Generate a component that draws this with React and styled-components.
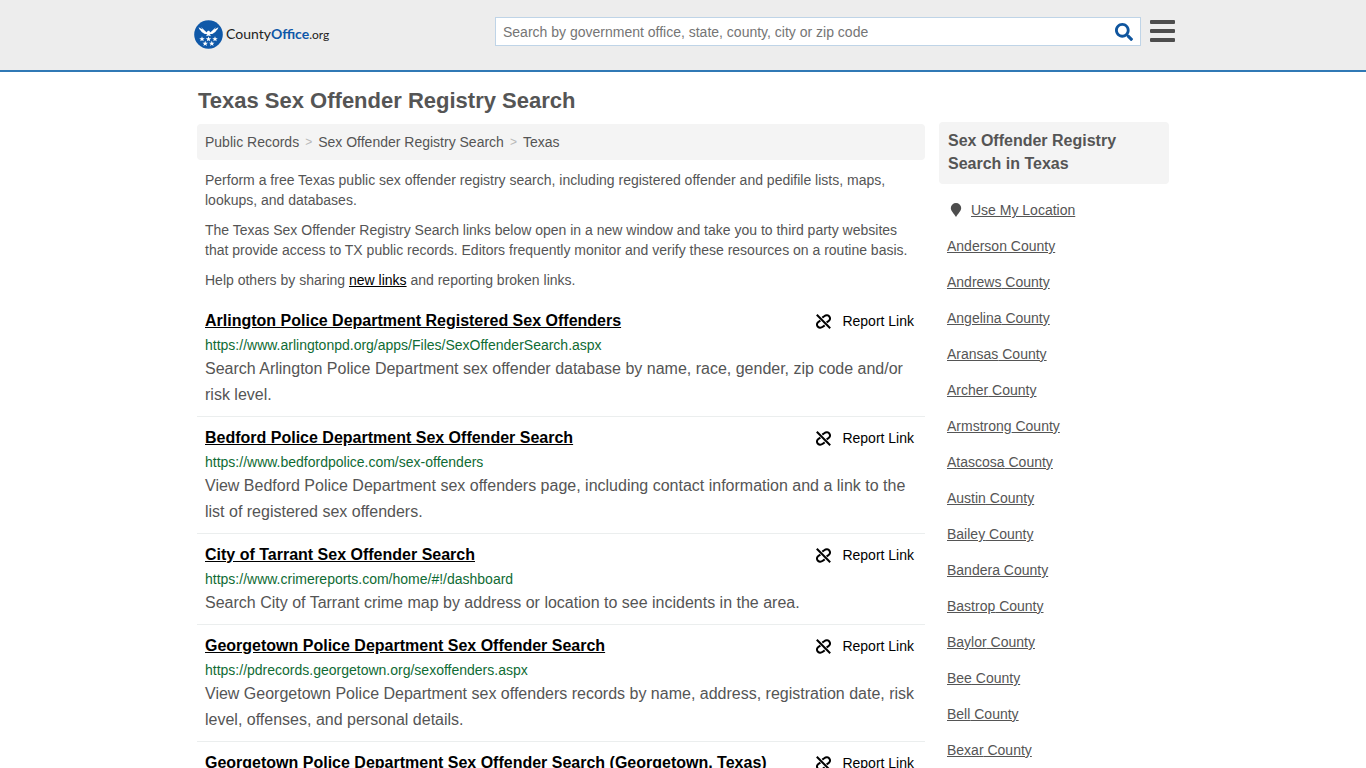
import React from 'react';
import { useState } from 'react';
import styled, { createGlobalStyle } from 'styled-components';
import { FaSearch } from 'react-icons/fa';

const results = [
    {
        title: 'Arlington Police Department Registered Sex Offenders',
        url: 'https://www.arlingtonpd.org/apps/Files/SexOffenderSearch.aspx',
        text: 'Search Arlington Police Department sex offender database by name, race, gender, zip code and/or risk level.',
    },
    {
        title: 'Bedford Police Department Sex Offender Search',
        url: 'https://www.bedfordpolice.com/sex-offenders',
        text: 'View Bedford Police Department sex offenders page, including contact information and a link to the list of registered sex offenders.',
    },
    {
        title: 'City of Tarrant Sex Offender Search',
        url: 'https://www.crimereports.com/home/#!/dashboard',
        text: 'Search City of Tarrant crime map by address or location to see incidents in the area.',
    },
    {
        title: 'Georgetown Police Department Sex Offender Search',
        url: 'https://pdrecords.georgetown.org/sexoffenders.aspx',
        text: 'View Georgetown Police Department sex offenders records by name, address, registration date, risk level, offenses, and personal details.',
    },
    {
        title: 'Georgetown Police Department Sex Offender Search (Georgetown, Texas)',
    },
];

const counties = [
    'Anderson', 'Andrews', 'Angelina', 'Aransas', 'Archer', 'Armstrong', 'Atascosa', 'Austin',
    'Bailey', 'Bandera', 'Bastrop', 'Baylor', 'Bee', 'Bell', 'Bexar',
];

const star = 'M0 -1.9 L0.5 -0.6 L1.9 -0.6 L0.8 0.3 L1.2 1.6 L0 0.8 L-1.2 1.6 L-0.8 0.3 L-1.9 -0.6 L-0.5 -0.6 Z';
const stars = [[8, 19], [14.5, 19], [21, 19], [11.2, 23.6], [17.8, 23.6]];

function Emblem () {
    return (
        <svg width="29" height="29" viewBox="0 0 29 29" aria-hidden="true">
            <circle cx="14.5" cy="14.5" r="14.3" fill="#0f58a8" />
            <path
                fill="#fff"
                d="M4.6 7.2 L8.6 9.6 L7 7 L11.4 11.2 L13 12.6 C13 11.4 13.6 10.8 14.5 10.8 C15.4 10.8 16 11.4 16 12.6 L17.6 11.2 L22 7 L20.4 9.6 L24.4 7.2 C24 8.8 23.2 10 22 10.8 C21.8 11.8 21 12.6 20 12.8 C19.2 13.8 18.2 14.2 17 14 L15.6 14.6 L17.2 16.2 L14.5 15.6 L11.8 16.2 L13.4 14.6 L12 14 C10.8 14.2 9.8 13.8 9 12.8 C8 12.6 7.2 11.8 7 10.8 C5.8 10 5 8.8 4.6 7.2 Z"
            />
            {stars.map(([x, y]) => (
                <path key={`${x}-${y}`} d={star} fill="#fff" transform={`translate(${x} ${y}) scale(1.45)`} />
            ))}
        </svg>
    );
}

function BrokenLink () {
    return (
        <svg width="15" height="15" viewBox="0 0 15 15" fill="none" stroke="#000" strokeWidth="2" aria-hidden="true">
            <path d="M0.8 0.8 L14.2 14.2" />
            <path d="M6.3 3.6 L8.2 2.2 C10 0.8 12.4 1 13.4 2.6 C14.6 4.4 14 6.4 12.2 7.4 L10.6 8.4" />
            <path d="M8.7 11.4 L6.8 12.8 C5 14.2 2.6 14 1.6 12.4 C0.4 10.6 1 8.6 2.8 7.6 L4.4 6.6" />
        </svg>
    );
}

function Pin () {
    return (
        <svg width="12" height="16" viewBox="0 0 12 16" aria-hidden="true">
            <path d="M6 1 A5.2 5.2 0 0 1 11.2 6 C11.2 9 8 11.6 6 15 C4 11.6 0.8 9 0.8 6 A5.2 5.2 0 0 1 6 1 Z" fill="#4d4d4d" />
        </svg>
    );
}

export default function App () {

    const [search, setSearch] = useState('');

    return (
        <>
            <GlobalStyle />
            <Header>
                <HeaderInner>
                    <Logo href="#">
                        <Emblem />
                        <LogoName>County<b>Office</b><span>.org</span></LogoName>
                    </Logo>
                    <SearchForm onSubmit={(e) => e.preventDefault()}>
                        <SearchInput
                            type="text"
                            aria-label="Search"
                            placeholder="Search by government office, state, county, city or zip code"
                            value={search}
                            onChange={(e) => setSearch(e.target.value)}
                        />
                        <SearchButton type="submit" aria-label="Submit search">
                            <FaSearch size={18} />
                        </SearchButton>
                    </SearchForm>
                    <MenuButton type="button" aria-label="Menu">
                        <svg width="25" height="22" viewBox="0 0 25 22" fill="#4d4d4d">
                            <rect y="0" width="25" height="4" rx="1" />
                            <rect y="9" width="25" height="4" rx="1" />
                            <rect y="18" width="25" height="4" rx="1" />
                        </svg>
                    </MenuButton>
                </HeaderInner>
            </Header>

            <Page>
                <Title>Texas Sex Offender Registry Search</Title>
                <Columns>
                    <Main>
                        <Breadcrumb aria-label="Breadcrumb">
                            <a href="#">Public Records</a>
                            <Divider>&gt;</Divider>
                            <a href="#">Sex Offender Registry Search</a>
                            <Divider>&gt;</Divider>
                            <a href="#">Texas</a>
                        </Breadcrumb>
                        <Intro>
                            Perform a free Texas public sex offender registry search, including registered offender and pedifile lists, maps, lookups, and databases.
                        </Intro>
                        <Intro>
                            The Texas Sex Offender Registry Search links below open in a new window and take you to third party websites that provide access to TX public records. Editors frequently monitor and verify these resources on a routine basis.
                        </Intro>
                        <Intro>
                            Help others by sharing <a href="#">new links</a> and reporting broken links.
                        </Intro>
                        {results.map((item) => (
                            <Result key={item.title}>
                                <ResultTop>
                                    <ResultTitle><a href="#">{item.title}</a></ResultTitle>
                                    <Report type="button">
                                        <BrokenLink />
                                        Report Link
                                    </Report>
                                </ResultTop>
                                {item.url && <ResultUrl>{item.url}</ResultUrl>}
                                {item.text && <ResultText>{item.text}</ResultText>}
                            </Result>
                        ))}
                    </Main>
                    <Sidebar>
                        <SideTitle>Sex Offender Registry Search in Texas</SideTitle>
                        <SideList>
                            <SideItem>
                                <Pin />
                                <a href="#">Use My Location</a>
                            </SideItem>
                            {counties.map((name) => (
                                <SideItem key={name}>
                                    <a href="#">{name} County</a>
                                </SideItem>
                            ))}
                        </SideList>
                    </Sidebar>
                </Columns>
            </Page>
        </>
    );
}

const GlobalStyle = createGlobalStyle`
    * {
        box-sizing: border-box;
    }

    html {
        scrollbar-width: none;
    }

    body {
        margin: 0;
        background-color: #fff;
        color: #555;
        font-family: 'Liberation Sans', Arial, sans-serif;
        font-size: 14px;
        line-height: 20px;
    }

    a {
        color: inherit;
    }

    button, input {
        font: inherit;
    }
`

const Header = styled.header`
    background-color: #ededed;
    border-bottom: 2px solid #3079b5;
`

const HeaderInner = styled.div`
    display: flex;
    align-items: flex-start;
    max-width: 984px;
    height: 70px;
    margin: 0 auto;
    padding: 17px 0 0 3px;
`

const Logo = styled.a`
    display: flex;
    align-items: center;
    gap: 3px;
    margin-top: 3px;
    color: #222;
    text-decoration: none;
`

const LogoName = styled.span`
    font-family: Lato, sans-serif;
    font-size: 14px;
    line-height: 28px;

    b {
        color: #0f58a8;
    }

    span {
        font-size: 12px;
    }
`

const SearchForm = styled.form`
    display: flex;
    flex: 0 1 646px;
    height: 29px;
    margin-left: auto;
    background-color: #fff;
    border: 1px solid #bfd4e7;
`

const SearchInput = styled.input`
    flex: 1;
    min-width: 0;
    padding: 0 7px;
    border: none;
    outline: none;
    background: none;
    color: #555;

    &::placeholder {
        color: #757575;
        opacity: 1;
    }
`

const SearchButton = styled.button`
    display: flex;
    align-items: center;
    padding: 0 7px;
    border: none;
    background: none;
    color: #0f559e;
    cursor: pointer;
`

const MenuButton = styled.button`
    display: flex;
    margin-left: 9px;
    padding: 3px 0 0;
    border: none;
    background: none;
    cursor: pointer;
`

const Page = styled.div`
    max-width: 972px;
    margin: 0 auto;
`

const Title = styled.h1`
    margin: 0;
    padding: 15px 1px 7px;
    font-size: 22px;
    line-height: 28px;
`

const Columns = styled.div`
    display: flex;
    align-items: flex-start;
    gap: 14px;
`

const Main = styled.main`
    flex: 1;
    min-width: 0;
    padding-top: 2px;
`

const Breadcrumb = styled.nav`
    display: flex;
    gap: 6px;
    margin-bottom: 10px;
    padding: 8px;
    background-color: #f4f4f4;
    border-radius: 4px;

    a {
        text-decoration: none;
    }
`

const Divider = styled.span`
    color: #b8b8b8;
    font-size: 12px;
`

const Intro = styled.p`
    margin: 0 0 10px;
    padding: 0 8px;

    a {
        color: #000;
    }
`

const Result = styled.article`
    padding: 8px;
    border-bottom: 1px solid #ebeeee;
`

const ResultTop = styled.div`
    display: flex;
    justify-content: space-between;
`

const ResultTitle = styled.h2`
    margin: 0;
    color: #000;
    font-size: 16px;
    line-height: 26px;
`

const Report = styled.button`
    display: flex;
    align-items: center;
    gap: 11px;
    padding: 0 3px;
    border: none;
    background: none;
    color: #000;
    cursor: pointer;
`

const ResultUrl = styled.div`
    color: #0f6b34;
    line-height: 22px;
`

const ResultText = styled.p`
    margin: 0;
    font-size: 16px;
    line-height: 26px;
`

const Sidebar = styled.aside`
    flex: 0 0 230px;
`

const SideTitle = styled.h2`
    margin: 0 0 8px;
    padding: 7px 9px 9px;
    background-color: #f4f4f4;
    border-radius: 4px;
    font-size: 16px;
    line-height: 23px;
`

const SideList = styled.ul`
    margin: 0;
    padding: 0 8px;
    list-style: none;
`

const SideItem = styled.li`
    display: flex;
    align-items: center;
    height: 36px;

    svg {
        margin: 0 9px 0 3px;
    }
`
